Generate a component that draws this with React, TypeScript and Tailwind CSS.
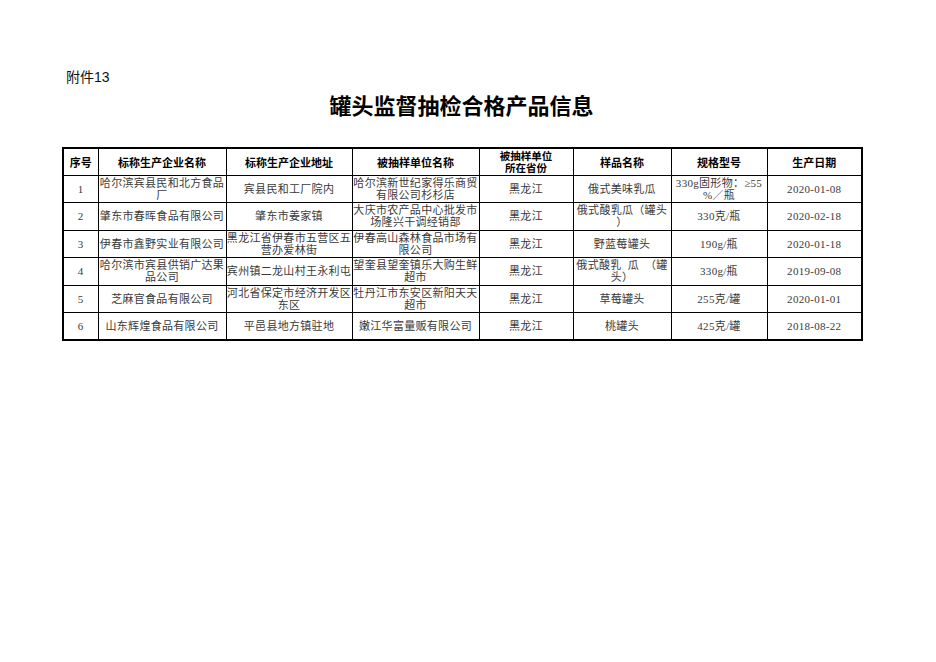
import React from "react";

type Row = { h: string; c: React.ReactNode[] };

const rows: Row[] = [
  {
    h: "h-[27px]",
    c: [
      "1",
      <>哈尔滨宾县民和北方食品<br />厂</>,
      "宾县民和工厂院内",
      <>哈尔滨新世纪家得乐商贸<br />有限公司杉杉店</>,
      "黑龙江",
      "俄式美味乳瓜",
      <>330g固形物：≥55<br />%／瓶</>,
      "2020-01-08",
    ],
  },
  {
    h: "h-[28px]",
    c: [
      "2",
      "肇东市春晖食品有限公司",
      "肇东市姜家镇",
      <>大庆市农产品中心批发市<br />场隆兴干调经销部</>,
      "黑龙江",
      <>俄式酸乳瓜（罐头<br />）</>,
      "330克/瓶",
      "2020-02-18",
    ],
  },
  {
    h: "h-[27px]",
    c: [
      "3",
      "伊春市鑫野实业有限公司",
      <>黑龙江省伊春市五营区五<br />营办爱林街</>,
      <>伊春高山森林食品市场有<br />限公司</>,
      "黑龙江",
      "野蓝莓罐头",
      "190g/瓶",
      "2020-01-18",
    ],
  },
  {
    h: "h-[28px]",
    c: [
      "4",
      <>哈尔滨市宾县供销广达果<br />品公司</>,
      "宾州镇二龙山村王永利屯",
      <>望奎县望奎镇乐大购生鲜<br />超市</>,
      "黑龙江",
      <>俄式酸乳&nbsp;&nbsp;瓜&nbsp;&nbsp;（罐<br />头）</>,
      "330g/瓶",
      "2019-09-08",
    ],
  },
  {
    h: "h-[27px]",
    c: [
      "5",
      "芝麻官食品有限公司",
      <>河北省保定市经济开发区<br />东区</>,
      <>牡丹江市东安区新阳天天<br />超市</>,
      "黑龙江",
      "草莓罐头",
      "255克/罐",
      "2020-01-01",
    ],
  },
  {
    h: "h-[28px]",
    c: [
      "6",
      "山东辉煌食品有限公司",
      "平邑县地方镇驻地",
      "嫩江华富量贩有限公司",
      "黑龙江",
      "桃罐头",
      "425克/罐",
      "2018-08-22",
    ],
  },
];

const colClasses = [
  "w-[35px]",
  "w-[128px]",
  "w-[126px]",
  "w-[127px]",
  "w-[94px]",
  "w-[98px]",
  "w-[96px]",
  "w-[95px]",
];

const headers: React.ReactNode[] = [
  "序号",
  "标称生产企业名称",
  "标称生产企业地址",
  "被抽样单位名称",
  <span className="flex flex-col items-center text-[10.5px] leading-[12px]">
    <span>被抽样单位</span>
    <span>所在省份</span>
  </span>,
  "样品名称",
  "规格型号",
  "生产日期",
];

export default function App() {
  return (
    <div className="w-[936px] h-[662px] bg-white text-black pt-[67px] pl-[62px]">
      <div className="h-[20px] leading-[20px] text-[14px] pl-[4px] text-[#111] font-['Liberation_Sans','Noto_Sans_CJK_SC',sans-serif]">
        附件13
      </div>
      <div className="mt-[2px] w-[799px] h-[30px] leading-[30px] text-center text-[22px] font-bold font-['Noto_Sans_CJK_SC',sans-serif]">
        罐头监督抽检合格产品信息
      </div>
      <table className="mt-[28px] w-[799px] table-fixed border-collapse border-2 border-black">
        <colgroup>
          {colClasses.map((cls, i) => (
            <col key={i} className={cls} />
          ))}
        </colgroup>
        <thead>
          <tr className="h-[27px]">
            {headers.map((h, i) => (
              <th
                key={i}
                className="border border-black p-0 text-center align-middle text-[11px] leading-[12px] font-bold text-black font-['Noto_Sans_CJK_SC',sans-serif]"
              >
                {h}
              </th>
            ))}
          </tr>
        </thead>
        <tbody>
          {rows.map((r, ri) => (
            <tr key={ri} className={r.h}>
              {r.c.map((c, ci) => (
                <td
                  key={ci}
                  className="border border-black p-0 text-center align-middle text-[11px] leading-[12px] tracking-[0.3px] text-[#3a3a3a] whitespace-nowrap overflow-hidden font-['Liberation_Serif','Noto_Sans_CJK_SC',serif]"
                >
                  {c}
                </td>
              ))}
            </tr>
          ))}
        </tbody>
      </table>
    </div>
  );
}
